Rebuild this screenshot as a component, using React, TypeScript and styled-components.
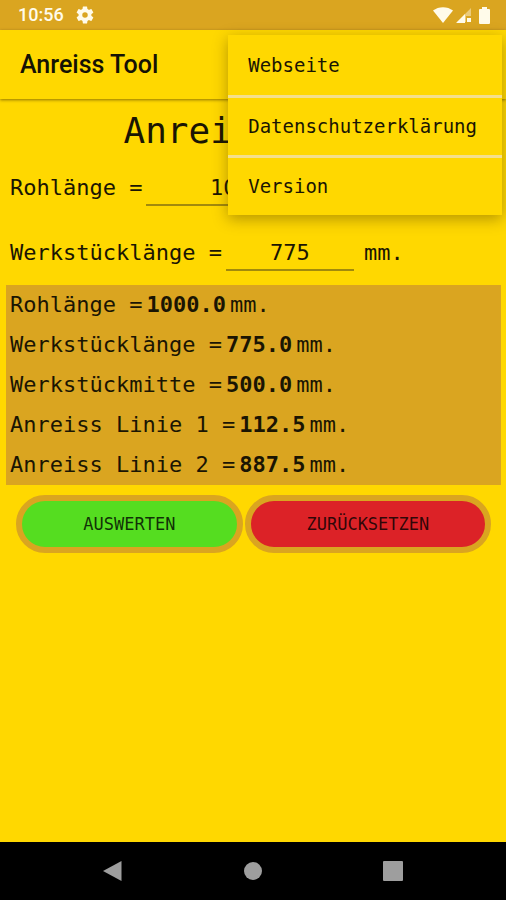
import React, { useState } from "react";
import styled, { createGlobalStyle } from "styled-components";

const gold = "#ffd800";
const ochre = "#daa520";
const mono = '"Droid Sans Mono", "DejaVu Sans Mono", monospace';

const GlobalStyle = createGlobalStyle`
  *, *::before, *::after { box-sizing: border-box; }
  body { margin: 0; background: ${gold}; }
`;

const Screen = styled.div`
  position: relative;
  display: flex;
  flex-direction: column;
  min-height: 100vh;
  background: ${gold};
  color: #1a1503;
  font-family: ${mono};
`;

const StatusBar = styled.div`
  display: flex;
  align-items: center;
  justify-content: space-between;
  height: 30px;
  padding: 0 16px 0 18px;
  background: ${ochre};
  color: #fffbea;
  font: 500 18px/30px Roboto, sans-serif;
`;

const StatusGroup = styled.div<{ $gap: number }>`
  display: flex;
  align-items: center;
  gap: ${(p) => p.$gap}px;
  svg { display: block; }
`;

const AppBar = styled.header`
  display: flex;
  align-items: center;
  height: 69px;
  padding: 0 20px;
  box-shadow: 0 1px 3px rgba(70, 50, 0, 0.6);
`;

const AppName = styled.h1`
  margin: 0;
  color: #151204;
  font: 500 25px/32px Roboto, sans-serif;
`;

const Main = styled.main`
  flex: 1;
  padding: 8px 5px 0 6px;
`;

const Title = styled.h2`
  margin: 0;
  text-align: center;
  font-size: 36px;
  font-weight: 400;
  line-height: 48px;
`;

const Field = styled.div`
  display: flex;
  align-items: center;
  height: 65px;
  padding-left: 4px;
  font-size: 22px;
`;

const FieldInput = styled.input<{ $width: number }>`
  width: ${(p) => p.$width}px;
  height: 36px;
  margin: 0 10px 0 4px;
  padding: 2px 0 0;
  border: 0;
  border-bottom: 2px solid #a28a0c;
  border-radius: 0;
  outline: 0;
  background: transparent;
  color: inherit;
  font: 400 22px/32px ${mono};
  text-align: center;
`;

const Results = styled.dl`
  margin: 0;
  padding-left: 4px;
  background: ${ochre};
  font-size: 22px;
  line-height: 40px;
`;

const ResultRow = styled.div`
  display: flex;
  gap: 4px;
`;

const Term = styled.dt`
  margin: 0;
`;

const Value = styled.dd`
  display: flex;
  gap: 4px;
  margin: 0;
`;

const Amount = styled.strong`
  font-weight: 700;
`;

const Actions = styled.div`
  display: flex;
  gap: 2px;
  padding: 10px 10px 0;
`;

const ActionButton = styled.button<{ $color: string; $grow: number }>`
  flex: ${(p) => p.$grow} 1 0;
  height: 58px;
  padding: 0;
  border: 6px solid ${ochre};
  border-radius: 29px;
  background: ${(p) => p.$color};
  color: rgba(0, 0, 0, 0.8);
  font: 400 17px/24px ${mono};
  text-transform: uppercase;
  cursor: pointer;
`;

const Menu = styled.nav`
  position: absolute;
  top: 35px;
  right: 4px;
  z-index: 2;
  display: flex;
  flex-direction: column;
  background: ${gold};
  box-shadow: 0 4px 14px rgba(70, 50, 0, 0.4);
`;

const MenuLink = styled.a`
  padding: 0 25px 0 20px;
  color: inherit;
  font-size: 19px;
  line-height: 60px;
  text-decoration: none;
  & + & {
    border-top: 3px solid #f4df8c;
    line-height: 57px;
  }
`;

const NavBar = styled.footer`
  display: flex;
  align-items: center;
  justify-content: space-between;
  height: 58px;
  padding: 0 102px;
  background: #000;
`;

const NavButton = styled.button`
  width: 22px;
  height: 22px;
  padding: 0;
  border: 0;
  background: none;
  cursor: pointer;
  svg { display: block; }
`;

const menuItems = ["Webseite", "Datenschutzerklärung", "Version"];

const results = [
  ["Rohlänge", "1000.0"],
  ["Werkstücklänge", "775.0"],
  ["Werkstückmitte", "500.0"],
  ["Anreiss Linie 1", "112.5"],
  ["Anreiss Linie 2", "887.5"],
];

const GearIcon = () => (
  <svg width="18" height="18" viewBox="1.500 1.500 21 21" fill="currentColor" fillRule="evenodd" aria-hidden="true">
    <path d="M19.4 13c.04-.3.06-.66.06-1s-.02-.7-.06-1l2.1-1.6c.2-.16.24-.43.12-.65l-2-3.46c-.12-.22-.38-.3-.6-.22l-2.5 1a7.3 7.3 0 0 0-1.7-.98l-.38-2.65A.5.5 0 0 0 13.95 2h-4a.5.5 0 0 0-.48.42L9.1 5.07c-.6.25-1.17.58-1.69.98l-2.49-1a.5.5 0 0 0-.6.22l-2 3.46a.5.5 0 0 0 .12.64L4.55 11a8 8 0 0 0 0 2l-2.1 1.63a.5.5 0 0 0-.12.64l2 3.46c.12.22.38.3.6.22l2.5-1c.5.4 1.07.73 1.68.98l.38 2.65c.03.24.24.42.48.42h4a.5.5 0 0 0 .49-.42l.38-2.65c.6-.25 1.17-.58 1.69-.98l2.49 1c.22.08.48 0 .6-.22l2-3.46a.5.5 0 0 0-.12-.64zM12 15.200a3.200 3.200 0 1 1 0-6.400 3.200 3.200 0 0 1 0 6.400z" />
  </svg>
);

const WifiIcon = () => (
  <svg width="20" height="16" viewBox="0 0 20 16" fill="currentColor" aria-hidden="true">
    <path d="M0 3.6C5.6-.9 14.4-.9 20 3.6L10 16z" />
  </svg>
);

const SignalIcon = () => (
  <svg width="16" height="16" viewBox="0 0 16 16" fill="currentColor" aria-hidden="true">
    <path d="M15 1v8h-5v6H1z" opacity=".45" />
    <path d="M0 16 9 7v9zM11 11h4v4h-4z" />
  </svg>
);

const BatteryIcon = () => (
  <svg width="11" height="17" viewBox="0 0 11 17" fill="currentColor" aria-hidden="true">
    <path d="M3 0h5v2h2q1 0 1 1v13q0 1-1 1H1q-1 0-1-1V3q0-1 1-1h2z" />
  </svg>
);

export default function App() {
  const [raw, setRaw] = useState("1000");
  const [piece, setPiece] = useState("775");
  return (
    <Screen>
      <GlobalStyle />
      <StatusBar>
        <StatusGroup $gap={12}>
          <span>10:56</span>
          <GearIcon />
        </StatusGroup>
        <StatusGroup $gap={3}>
          <WifiIcon />
          <StatusGroup $gap={7}>
            <SignalIcon />
            <BatteryIcon />
          </StatusGroup>
        </StatusGroup>
      </StatusBar>
      <AppBar>
        <AppName>Anreiss Tool</AppName>
      </AppBar>
      <Menu aria-label="Menü">
        {menuItems.map((item) => (
          <MenuLink key={item} href="#">{item}</MenuLink>
        ))}
      </Menu>
      <Main>
        <Title>Anreiss Tool</Title>
        <Field>
          <label htmlFor="raw">Rohlänge =</label>
          <FieldInput id="raw" $width={180} value={raw} onChange={(e) => setRaw(e.target.value)} />
          <span>mm.</span>
        </Field>
        <Field>
          <label htmlFor="piece">Werkstücklänge =</label>
          <FieldInput id="piece" $width={128} value={piece} onChange={(e) => setPiece(e.target.value)} />
          <span>mm.</span>
        </Field>
        <Results>
          {results.map(([name, value]) => (
            <ResultRow key={name}>
              <Term>{name} =</Term>
              <Value>
                <Amount>{value}</Amount>
                <span>mm.</span>
              </Value>
            </ResultRow>
          ))}
        </Results>
        <Actions>
          <ActionButton type="button" $color="#55dd20" $grow={11}>Auswerten</ActionButton>
          <ActionButton type="button" $color="#dc2227" $grow={12}>Zurücksetzen</ActionButton>
        </Actions>
      </Main>
      <NavBar>
        <NavButton type="button" aria-label="Zurück">
          <svg width="22" height="22" viewBox="0 0 22 22" fill="#9e9e9e"><path d="M19.500 1v20L1 11z" /></svg>
        </NavButton>
        <NavButton type="button" aria-label="Startseite">
          <svg width="22" height="22" viewBox="0 0 22 22" fill="#9e9e9e"><circle cx="11" cy="11" r="9" /></svg>
        </NavButton>
        <NavButton type="button" aria-label="Übersicht">
          <svg width="22" height="22" viewBox="0 0 22 22" fill="#9e9e9e"><rect x="1" y="1" width="20" height="20" rx="1" /></svg>
        </NavButton>
      </NavBar>
    </Screen>
  );
}
